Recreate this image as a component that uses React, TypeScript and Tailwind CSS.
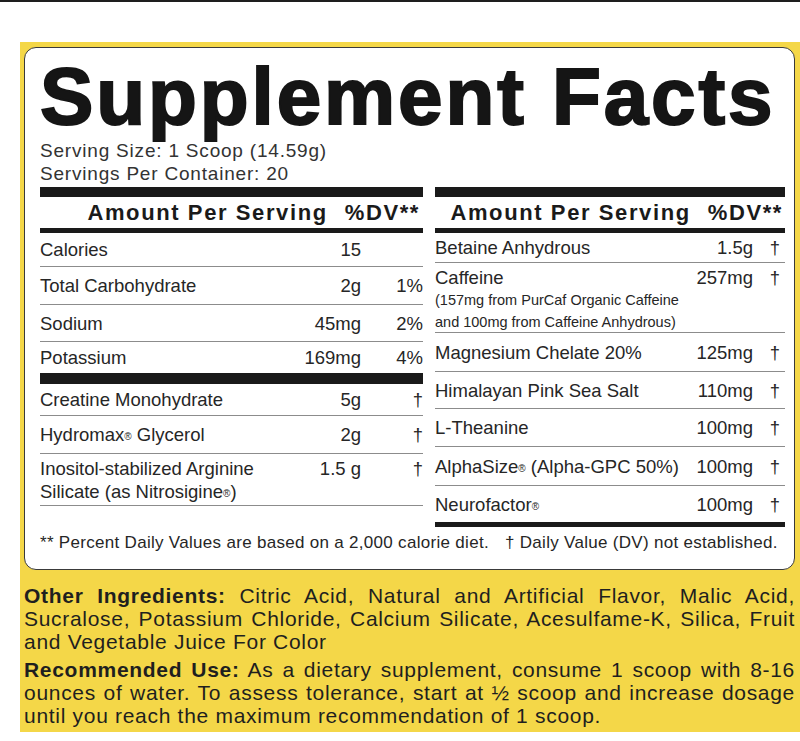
import React from "react";

type Row = {
  name: React.ReactNode;
  amount: string;
  dv: string;
  h: string;
  sub?: string[];
  multi?: boolean;
  last?: boolean;
};

const R = () => <sup className="text-[10px] relative -top-[1px]">®</sup>;

const leftTop: Row[] = [
  { name: "Calories", amount: "15", dv: "", h: "h-[34px]" },
  { name: "Total Carbohydrate", amount: "2g", dv: "1%", h: "h-[38px]" },
  { name: "Sodium", amount: "45mg", dv: "2%", h: "h-[37px]" },
  { name: "Potassium", amount: "169mg", dv: "4%", h: "h-[31px]", last: true },
];

const leftBottom: Row[] = [
  { name: "Creatine Monohydrate", amount: "5g", dv: "†", h: "h-[32px]" },
  { name: <>Hydromax<R /> Glycerol</>, amount: "2g", dv: "†", h: "h-[38px]" },
  {
    name: (
      <>
        Inositol-stabilized Arginine
        <br />
        Silicate (as Nitrosigine<R />)
      </>
    ),
    amount: "1.5 g",
    dv: "†",
    h: "h-[52px]",
    multi: true,
  },
];

const rightRows: Row[] = [
  { name: "Betaine Anhydrous", amount: "1.5g", dv: "†", h: "h-[30px]" },
  {
    name: "Caffeine",
    amount: "257mg",
    dv: "†",
    h: "h-[70px]",
    multi: true,
    sub: ["(157mg from PurCaf Organic Caffeine", "and 100mg from Caffeine Anhydrous)"],
  },
  { name: "Magnesium Chelate 20%", amount: "125mg", dv: "†", h: "h-[39px]" },
  { name: "Himalayan Pink Sea Salt", amount: "110mg", dv: "†", h: "h-[37px]" },
  { name: "L-Theanine", amount: "100mg", dv: "†", h: "h-[38px]" },
  { name: <>AlphaSize<R /> (Alpha-GPC 50%)</>, amount: "100mg", dv: "†", h: "h-[39px]" },
  { name: <>Neurofactor<R /></>, amount: "100mg", dv: "†", h: "h-[36px]", last: true },
];

function FactRow({ row, dvWidth }: { row: Row; dvWidth: string }) {
  const border = row.last ? "" : "border-b-[1.5px] border-[#8c8c8c]";
  const align = row.multi ? "items-start pt-[3px]" : "items-center";
  return (
    <div className={`flex ${align} ${row.h} ${border}`}>
      <div className="flex-1 min-w-0 leading-[23px]">
        <div>{row.name}</div>
        {row.sub &&
          row.sub.map((s) => (
            <div key={s} className="text-[14.5px] leading-[22px]">
              {s}
            </div>
          ))}
      </div>
      <div className="text-right leading-[23px]">{row.amount}</div>
      <div className={`${dvWidth} text-right leading-[23px]`}>{row.dv}</div>
    </div>
  );
}

function Header({ pad }: { pad: string }) {
  return (
    <div className={`flex justify-end items-center gap-[17px] h-[31px] ${pad} font-bold text-[22px] tracking-[1.6px] text-[#1a1a1a]`}>
      <span>Amount Per Serving</span>
      <span>%DV**</span>
    </div>
  );
}

export default function App() {
  return (
    <div
      className="min-h-[741px] bg-white text-[#262626]"
      style={{ fontFamily: '"Liberation Sans", Arial, sans-serif' }}
    >
      <div className="h-[2px] bg-[#1e1e1e]" />
      <div className="ml-[20px] mt-[40px] w-[780px] bg-[#f4d748] pt-[5px] pl-[4px] pr-[5px] pb-[5px]">
        <div className="bg-white border-[1.5px] border-[#3a3a3a] rounded-[12px] pl-[15px] pr-[9px] pt-[9px] pb-[16px]">
          <h1 className="text-[80px] font-bold leading-none tracking-[2.9px] text-[#151515] [-webkit-text-stroke:2px_#151515]">
            Supplement Facts
          </h1>
          <div className="mt-[2px] text-[19px] leading-[23px] tracking-[0.8px] text-[#333]">
            <div>Serving Size: 1 Scoop (14.59g)</div>
            <div>Servings Per Container: 20</div>
          </div>

          <div className="mt-[2px] grid grid-cols-[383px_350px] gap-x-[12px] text-[18.5px]">
            <div>
              <div className="h-[10px] bg-[#1a1a1a]" />
              <Header pad="pr-[3px]" />
              <div className="h-[5px] bg-[#1a1a1a]" />
              {leftTop.map((r, i) => (
                <FactRow key={i} row={r} dvWidth="w-[62px]" />
              ))}
              <div className="h-[11px] bg-[#1a1a1a]" />
              {leftBottom.map((r, i) => (
                <FactRow key={i} row={r} dvWidth="w-[62px]" />
              ))}
            </div>
            <div>
              <div className="h-[10px] bg-[#1a1a1a]" />
              <Header pad="pr-[2px]" />
              <div className="h-[5px] bg-[#1a1a1a]" />
              {rightRows.map((r, i) => (
                <FactRow key={i} row={r} dvWidth="w-[32px] pr-[5px]" />
              ))}
              <div className="h-[5px] bg-[#1a1a1a]" />
            </div>
          </div>

          <div className="mt-[6px] text-[17px] leading-[20px] tracking-[0.3px]">
            <span>** Percent Daily Values are based on a 2,000 calorie diet.</span>
            <span className="ml-[16px]">† Daily Value (DV) not established.</span>
          </div>
        </div>

        <div className="mt-[14px] text-[21px] leading-[23px] tracking-[0.7px] text-[#1f1f1f]">
          <div className="text-justify [text-align-last:justify]">
            <b>Other Ingredients:</b> Citric Acid, Natural and Artificial Flavor, Malic Acid,
          </div>
          <div className="text-justify [text-align-last:justify]">
            Sucralose, Potassium Chloride, Calcium Silicate, Acesulfame-K, Silica, Fruit
          </div>
          <div>and Vegetable Juice For Color</div>

          <div className="mt-[5px] text-justify [text-align-last:justify]">
            <b>Recommended Use:</b> As a dietary supplement, consume 1 scoop with 8-16
          </div>
          <div className="text-justify [text-align-last:justify]">
            ounces of water. To assess tolerance, start at ½ scoop and increase dosage
          </div>
          <div>until you reach the maximum recommendation of 1 scoop.</div>
        </div>
      </div>
    </div>
  );
}
